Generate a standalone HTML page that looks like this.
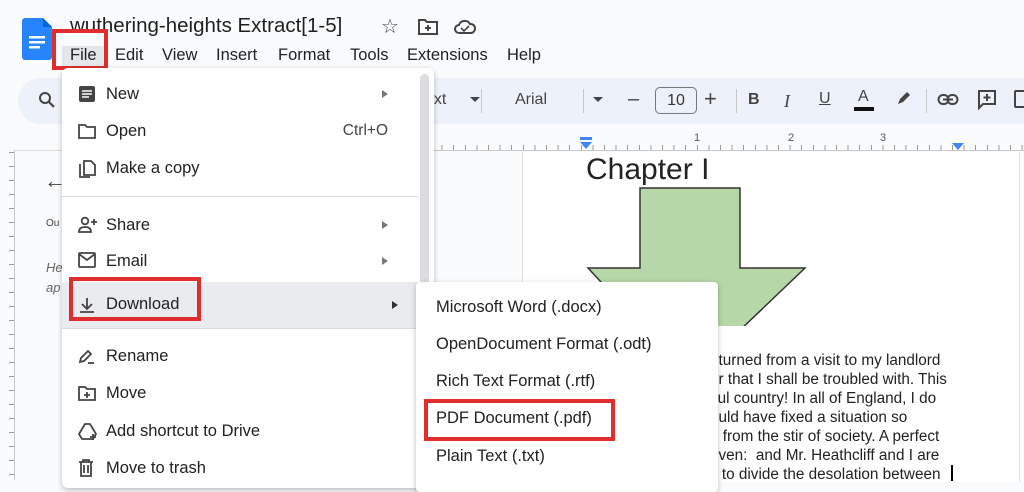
<!DOCTYPE html>
<html><head><meta charset="utf-8"><style>
*{margin:0;padding:0;box-sizing:border-box}
body{width:1024px;height:478px;overflow:hidden;background:#f9fbfd;font-family:"Liberation Sans",Arial,sans-serif;color:#202124;position:relative}
.a{position:absolute;white-space:nowrap}
.mi{position:absolute;left:0;width:360px;height:36px;font-size:16.5px;color:#202124}
.mi .t{position:absolute;left:44px;top:9px}
.mi svg{position:absolute;left:16px;top:9px}
.arr{position:absolute;right:34px;top:14px;width:0;height:0;border-left:6px solid #777;border-top:4px solid transparent;border-bottom:4px solid transparent}
.si{position:absolute;left:20px;font-size:16.5px;color:#202124}
.tb{color:#444;font-size:16px}
</style></head><body>
<svg class="a" style="left:22px;top:18px" width="30" height="42" viewBox="0 0 30 42"><path d="M3 0h18l9 9v30a3 3 0 0 1-3 3H3a3 3 0 0 1-3-3V3a3 3 0 0 1 3-3z" fill="#2684fc"/><path d="M21 0v9h9z" fill="#0066da"/><rect x="7" y="18" width="16" height="2.5" fill="#fff"/><rect x="7" y="23" width="16" height="2.5" fill="#fff"/><rect x="7" y="28" width="11" height="2.5" fill="#fff"/></svg>
<div class="a" style="left:70px;top:14px;font-size:20.5px;color:#1f1f1f">wuthering-heights Extract[1-5]</div>
<div class="a" style="left:381px;top:14px;font-size:20px;color:#444">☆</div>
<svg class="a" style="left:417px;top:18px" width="22" height="18" viewBox="0 0 22 18"><path d="M2 2h6l2 2h10v12H2z" fill="none" stroke="#444" stroke-width="2"/><path d="M11 7v6M8 10h6" stroke="#444" stroke-width="2"/></svg>
<svg class="a" style="left:453px;top:17px" width="24" height="20" viewBox="0 0 24 20"><path d="M6 16a4 4 0 0 1 0-8 6 6 0 0 1 11-1 4.5 4.5 0 0 1 1 9z" fill="none" stroke="#444" stroke-width="2"/><path d="M8 11l3 3 5-5" fill="none" stroke="#444" stroke-width="1.6"/></svg>
<div class="a" style="left:62px;top:46px;width:42px;height:22px;background:#e3e6ea"></div>
<div class="a" style="left:70px;top:46px;font-size:16.5px;color:#202124">File</div>
<div class="a" style="left:115px;top:46px;font-size:16.5px;color:#202124">Edit</div>
<div class="a" style="left:162px;top:46px;font-size:16.5px;color:#202124">View</div>
<div class="a" style="left:216px;top:46px;font-size:16.5px;color:#202124">Insert</div>
<div class="a" style="left:278px;top:46px;font-size:16.5px;color:#202124">Format</div>
<div class="a" style="left:350px;top:46px;font-size:16.5px;color:#202124">Tools</div>
<div class="a" style="left:407px;top:46px;font-size:16.5px;color:#202124">Extensions</div>
<div class="a" style="left:507px;top:46px;font-size:16.5px;color:#202124">Help</div>
<div class="a" style="left:52px;top:29px;width:56px;height:41px;border:4px solid #e02d2d"></div>
<div class="a" style="left:18px;top:78px;width:1040px;height:46px;background:#edf2fa;border-radius:23px"></div>
<svg class="a" style="left:38px;top:91px" width="18" height="18" viewBox="0 0 18 18"><circle cx="7" cy="7" r="5" fill="none" stroke="#444" stroke-width="2"/><path d="M11 11l5 5" stroke="#444" stroke-width="2.2"/></svg>
<div class="a tb" style="left:425px;top:91px">ext</div>
<div class="a" style="left:470px;top:97px;border-top:5px solid #444;border-left:5px solid transparent;border-right:5px solid transparent"></div>
<div class="a" style="left:481px;top:89px;width:1px;height:24px;background:#c7c7c7"></div>
<div class="a tb" style="left:515px;top:91px">Arial</div>
<div class="a" style="left:593px;top:97px;border-top:5px solid #444;border-left:5px solid transparent;border-right:5px solid transparent"></div>
<div class="a" style="left:583px;top:89px;width:1px;height:24px;background:#c7c7c7"></div>
<div class="a tb" style="left:628px;top:88px;font-size:20px">–</div>
<div class="a" style="left:655px;top:87px;width:42px;height:27px;border:1px solid #747775;border-radius:5px;font-size:16px;color:#333;text-align:center;line-height:25px">10</div>
<div class="a tb" style="left:704px;top:86px;font-size:22px">+</div>
<div class="a" style="left:736px;top:89px;width:1px;height:24px;background:#c7c7c7"></div>
<div class="a tb" style="left:748px;top:91px;font-weight:bold">B</div>
<div class="a tb" style="left:784px;top:91px;font-style:italic;font-family:'Liberation Serif',serif;font-size:18px">I</div>
<div class="a tb" style="left:819px;top:90px;text-decoration:underline">U</div>
<div class="a tb" style="left:858px;top:88px">A</div>
<div class="a" style="left:854px;top:107px;width:20px;height:4px;background:#111"></div>
<svg class="a" style="left:895px;top:89px" width="18" height="18" viewBox="0 0 18 18"><path d="M3 15l2-5 7-7 3 3-7 7z" fill="#444"/></svg>
<div class="a" style="left:926px;top:89px;width:1px;height:24px;background:#c7c7c7"></div>
<svg class="a" style="left:937px;top:93px" width="22" height="14" viewBox="0 0 22 14"><rect x="1.5" y="2" width="10" height="9" rx="4.5" fill="none" stroke="#444" stroke-width="2"/><rect x="10.5" y="2" width="10" height="9" rx="4.5" fill="none" stroke="#444" stroke-width="2"/><path d="M6 6.5h10" stroke="#444" stroke-width="2"/></svg>
<svg class="a" style="left:977px;top:89px" width="20" height="22" viewBox="0 0 20 22"><path d="M2 2h16v13H6l-4 4z" fill="none" stroke="#444" stroke-width="2"/><path d="M10 5v7M6.5 8.5h7" stroke="#444" stroke-width="2"/></svg>
<div class="a" style="left:1014px;top:90px;width:16px;height:18px;border:2px solid #444;border-radius:2px"></div>
<div class="a" style="left:430px;top:150px;width:600px;height:1px;background:#c8c8c8"></div>
<div class="a" style="left:430px;top:140px;width:600px;height:10px;background:repeating-linear-gradient(90deg,#999 0 1px,transparent 1px 11.6px);clip-path:inset(5px 0 0 0)"></div>
<div class="a" style="left:694px;top:132px;font-size:11px;color:#555">1</div>
<div class="a" style="left:788px;top:132px;font-size:11px;color:#555">2</div>
<div class="a" style="left:880px;top:132px;font-size:11px;color:#555">3</div>
<div class="a" style="left:580px;top:137px;width:12px;height:3px;background:#4285f4"></div>
<div class="a" style="left:580px;top:142px;border-top:7px solid #4285f4;border-left:6px solid transparent;border-right:6px solid transparent"></div>
<div class="a" style="left:952px;top:143px;border-top:7px solid #4285f4;border-left:6px solid transparent;border-right:6px solid transparent"></div>
<div class="a" style="left:14px;top:150px;width:1px;height:330px;background:#c8c8c8"></div>
<div class="a" style="left:6px;top:152px;width:8px;height:330px;background:repeating-linear-gradient(180deg,#999 0 1px,transparent 1px 14px);clip-path:inset(0 0 0 3px)"></div>
<div class="a" style="left:15px;top:150px;width:50px;height:1px;background:#ddd"></div>
<div class="a" style="left:44px;top:168px;font-size:22px;color:#444">←</div>
<div class="a" style="left:46px;top:218px;font-size:10px;color:#444">Ou</div>
<div class="a" style="left:46px;top:260px;font-size:13px;color:#666;font-style:italic">He</div>
<div class="a" style="left:46px;top:280px;font-size:13px;color:#666;font-style:italic">ap</div>
<div class="a" style="left:522px;top:152px;width:498px;height:330px;background:#fff;border-left:1px solid #e0e0e0;border-right:1px solid #e0e0e0"></div>
<div class="a" style="left:586px;top:153px;font-size:30px;color:#222">Chapter I</div>
<svg class="a" style="left:585px;top:186px" width="225" height="140" viewBox="0 0 225 140"><path d="M55 2h100v80h65l-115 110L3 82h52z" fill="#b6d7a8" stroke="#333" stroke-width="1.5"/></svg>
<div class="a" style="left:710px;top:351px;font-size:15.3px;line-height:19px;color:#222">
<div>eturned from a visit to my landlord</div><div>er that I shall be troubled with. This</div><div>iful country! In all of England, I do</div><div>ould have fixed a situation so</div><div>d from the stir of society. A perfect</div><div>even: &nbsp;and Mr. Heathcliff and I are</div><div>y to divide the desolation between</div></div>
<div class="a" style="left:951px;top:465px;width:2px;height:16px;background:#000"></div>
<div class="a" style="left:62px;top:68px;width:372px;height:420px;background:#fff;border-radius:6px;box-shadow:0 2px 6px rgba(0,0,0,.25)">
 <div class="a" style="left:358px;top:6px;width:9px;height:400px;background:#dadce0;border-radius:5px"></div>
 <div class="mi" style="top:8px"><svg width="18" height="18" viewBox="0 0 18 18"><rect x="1" y="1" width="16" height="16" rx="2" fill="#444"/><path d="M4 6h10M4 9h10M4 12h7" stroke="#fff" stroke-width="1.5"/></svg><span class="t">New</span><span class="arr"></span></div>
 <div class="mi" style="top:45px"><svg width="18" height="18" viewBox="0 0 18 18"><path d="M1 3h6l2 2h8v11H1z" fill="none" stroke="#444" stroke-width="1.8"/></svg><span class="t">Open</span><span class="a" style="right:34px;top:9px;color:#444;font-size:15.5px">Ctrl+O</span></div>
 <div class="mi" style="top:82px"><svg width="18" height="20" viewBox="0 0 18 20"><path d="M6 2h7l4 4v10H6z" fill="none" stroke="#444" stroke-width="1.8"/><path d="M2 5v13h10" fill="none" stroke="#444" stroke-width="1.8"/></svg><span class="t">Make a copy</span></div>
 <div class="a" style="left:0;top:128px;width:356px;height:1px;background:#dadce0"></div>
 <div class="mi" style="top:139px"><svg width="20" height="18" viewBox="0 0 20 18"><circle cx="7" cy="5" r="3.3" fill="none" stroke="#444" stroke-width="1.8"/><path d="M1 16c0-4 3-5 6-5s6 1 6 5z" fill="none" stroke="#444" stroke-width="1.8"/><path d="M16 3v6M13 6h6" stroke="#444" stroke-width="1.8"/></svg><span class="t">Share</span><span class="arr"></span></div>
 <div class="mi" style="top:175px"><svg width="18" height="16" viewBox="0 0 18 16"><rect x="1" y="1" width="16" height="14" rx="1" fill="none" stroke="#444" stroke-width="1.8"/><path d="M1 2l8 6 8-6" fill="none" stroke="#444" stroke-width="1.8"/></svg><span class="t">Email</span><span class="arr"></span></div>
 <div class="mi" style="top:214px;height:46px;background:#e9ebee;width:356px"><svg style="top:14px" width="18" height="18" viewBox="0 0 18 18"><path d="M9 2v10M4 8l5 5 5-5M2 16h14" fill="none" stroke="#444" stroke-width="1.8"/></svg><span class="t" style="top:13px">Download</span><span class="arr" style="top:19px;border-left-color:#333;right:20px"></span></div>
 <div class="a" style="left:0;top:260px;width:356px;height:1px;background:#dadce0"></div>
 <div class="mi" style="top:270px"><svg width="18" height="18" viewBox="0 0 18 18"><path d="M2 15l1-4 7-7 3 3-7 7z" fill="none" stroke="#444" stroke-width="1.8"/><path d="M10 16h6" stroke="#444" stroke-width="1.8"/></svg><span class="t">Rename</span></div>
 <div class="mi" style="top:307px"><svg width="18" height="18" viewBox="0 0 18 18"><path d="M1 3h6l2 2h8v11H1z" fill="none" stroke="#444" stroke-width="1.8"/><path d="M9 8v6M6 11h6" stroke="#444" stroke-width="1.8"/></svg><span class="t">Move</span></div>
 <div class="mi" style="top:345px"><svg width="20" height="20" viewBox="0 0 20 20"><path d="M7 2h5l6 10-3 5H4l-3-5z" fill="none" stroke="#444" stroke-width="1.8"/><path d="M15 12v6M12 15h6" stroke="#444" stroke-width="1.8"/></svg><span class="t">Add shortcut to Drive</span></div>
 <div class="mi" style="top:382px"><svg width="16" height="18" viewBox="0 0 16 18"><path d="M1 3h14M5 3V1h6v2M3 3v14h10V3M6 6v8M10 6v8" fill="none" stroke="#444" stroke-width="1.8"/></svg><span class="t">Move to trash</span></div>
</div>
<div class="a" style="left:69px;top:277px;width:132px;height:44px;border:4px solid #e02d2d"></div>
<div class="a" style="left:416px;top:282px;width:302px;height:210px;background:#fff;border-radius:4px;box-shadow:0 2px 6px rgba(0,0,0,.25)">
 <div class="si" style="top:16px">Microsoft Word (.docx)</div>
 <div class="si" style="top:53px">OpenDocument Format (.odt)</div>
 <div class="si" style="top:90px">Rich Text Format (.rtf)</div>
 <div class="si" style="top:127px">PDF Document (.pdf)</div>
 <div class="si" style="top:165px">Plain Text (.txt)</div>
</div>
<div class="a" style="left:424px;top:399px;width:191px;height:42px;border:4px solid #e02d2d"></div>
</body></html>
